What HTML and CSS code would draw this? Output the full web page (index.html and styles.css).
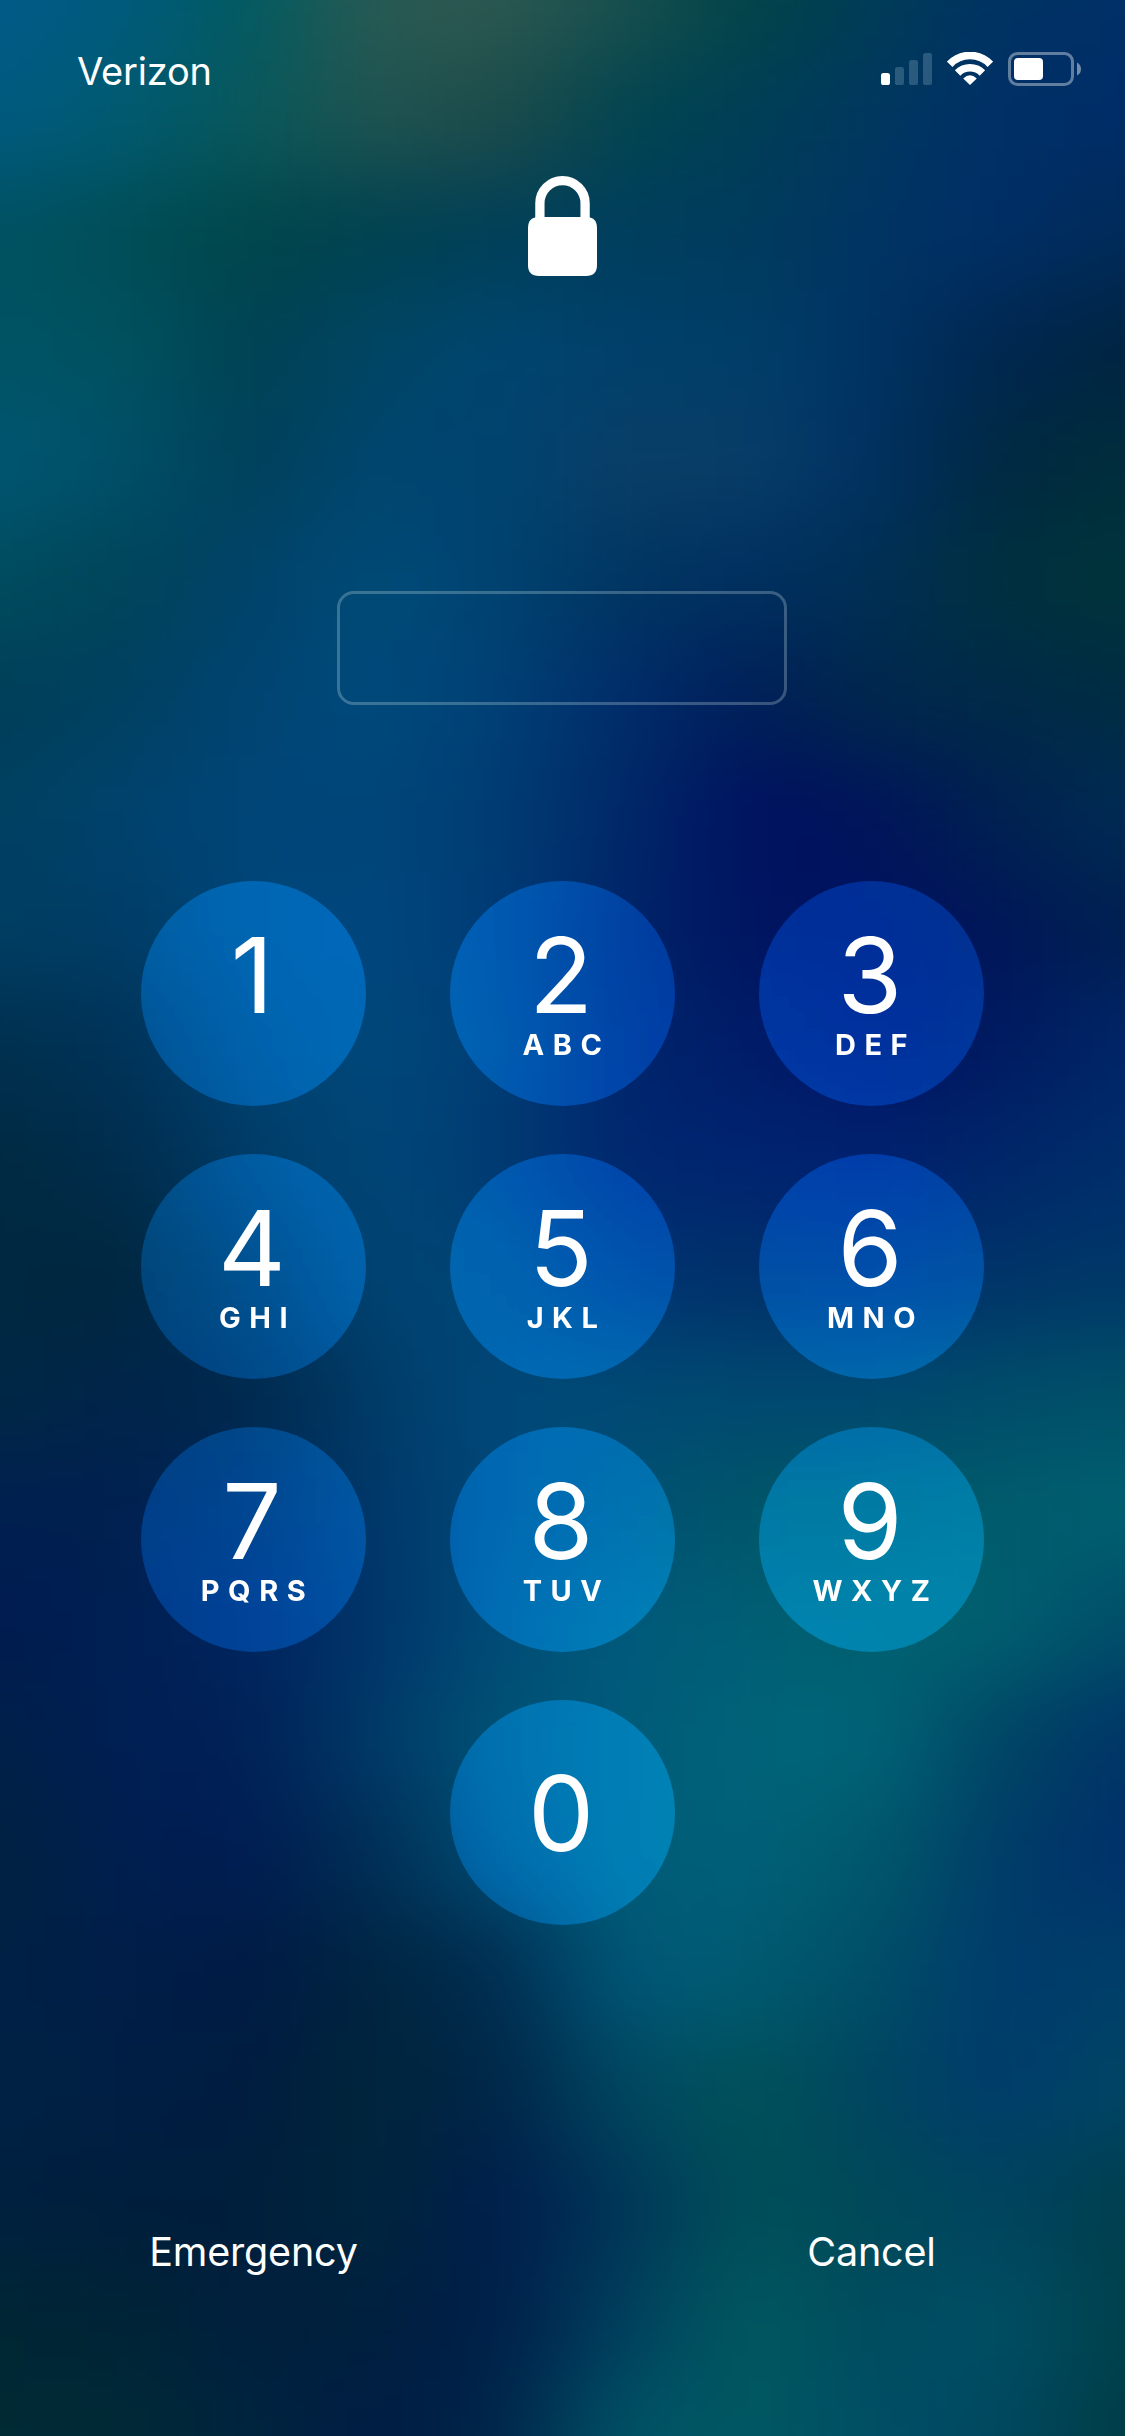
FILE: index.html
```
<!DOCTYPE html>
<html lang="en">
<head>
  <meta charset="UTF-8">
  <meta name="viewport" content="width=device-width, initial-scale=1.0">
  <title>Lock Screen</title>
  <link rel="stylesheet" href="styles.css">
</head>
<body>
  <div class="screen">
    <div class="wallpaper"></div>

    <header class="status-bar">
      <span class="carrier">Verizon</span>
      <div class="status-icons">
        <svg class="signal" width="51" height="32" viewBox="0 0 51 32" fill="#fff">
          <rect x="0" y="20" width="9" height="12" rx="2.6"/>
          <g fill="#dff6ff" opacity=".19">
            <rect x="14" y="14" width="9" height="18" rx="2.6"/>
            <rect x="28" y="7" width="9" height="25" rx="2.6"/>
            <rect x="42" y="0" width="9" height="32" rx="2.6"/>
          </g>
        </svg>
        <svg class="wifi" width="46" height="33" viewBox="0 0 46 33" fill="none" stroke="#fff" stroke-width="7.6">
          <path d="M2.7 12.3A27.7 27.7 0 0 1 43.3 12.3"/>
          <path d="M10.6 21A17.3 17.3 0 0 1 35.4 21"/>
          <path d="M23 33L16.2 26.4Q23 20 29.8 26.4Z" fill="#fff" stroke="none"/>
        </svg>
        <svg class="battery" width="73" height="34" viewBox="0 0 73 34">
          <rect x="1.5" y="1.5" width="63" height="31" rx="8" fill="none" stroke="#fff" stroke-opacity=".38" stroke-width="3"/>
          <rect x="6" y="6" width="29" height="22" rx="4" fill="#fff"/>
          <path d="M69 10.5Q73 12.5 73 17T69 23.5Z" fill="#fff" fill-opacity=".45"/>
        </svg>
      </div>
    </header>

    <svg class="lock" width="69" height="100" viewBox="0 0 69 100">
      <path d="M11.9 48V27.3a22.6 22.6 0 0 1 45.2 0V48" fill="none" stroke="#fff" stroke-width="9.3"/>
      <path d="M11 41H58Q69 41 69 52V89Q69 100 58 100H11Q0 100 0 89V52Q0 41 11 41Z" fill="#fff"/>
    </svg>

    <div class="passcode"></div>

    <main class="keypad">
      <button class="key"><span class="digit">1</span><span class="letters"></span></button>
      <button class="key"><span class="digit">2</span><span class="letters">ABC</span></button>
      <button class="key"><span class="digit">3</span><span class="letters">DEF</span></button>
      <button class="key"><span class="digit">4</span><span class="letters">GHI</span></button>
      <button class="key"><span class="digit">5</span><span class="letters">JKL</span></button>
      <button class="key"><span class="digit">6</span><span class="letters">MNO</span></button>
      <button class="key"><span class="digit">7</span><span class="letters">PQRS</span></button>
      <button class="key"><span class="digit">8</span><span class="letters">TUV</span></button>
      <button class="key"><span class="digit">9</span><span class="letters">WXYZ</span></button>
      <button class="key key-zero"><span class="digit">0</span></button>
    </main>

    <footer class="actions">
      <a class="emergency">Emergency</a>
      <a class="cancel">Cancel</a>
    </footer>
  </div>
</body>
</html>
```
FILE: styles.css
```
* {
  margin: 0;
  padding: 0;
  box-sizing: border-box;
}

body {
  font-family: Inter, "Liberation Sans", sans-serif;
  color: #fff;
  background: #002a4c;
}

.screen {
  position: relative;
  width: 1125px;
  height: 2436px;
  overflow: hidden;
  isolation: isolate;
  display: flex;
  flex-direction: column;
  align-items: center;
}

/* horizontal colour bands, blurred into each other */
.wallpaper {
  position: absolute;
  inset: -174px -125px;
  z-index: -1;
  filter: blur(42px);
  background-repeat: no-repeat;
  background-image:
    linear-gradient(90deg, #005a88 9.1%, #005a7c, #005a60, #2a5a52, #2c5850, #184f4e, #004447, #003c57, #003262, #003068 90.9%),
    linear-gradient(90deg, #005a80 9.1%, #005a70, #08585a, #205350, #1d4b49, #004550, #003e56, #00375f, #002f66, #002c68 90.9%),
    linear-gradient(90deg, #005262 9.1%, #004d56, #00464a, #004250, #003f58, #003e5e, #003b5c, #003464, #002e66, #002a58 90.9%),
    linear-gradient(90deg, #005364 9.1%, #005260, #004152, #004564, #004670, #003f6a, #003e68, #003262, #00264f, #002440 90.9%),
    linear-gradient(90deg, #005672 9.1%, #004f68, #004058, #004670, #004370, #0a3e66, #083e68, #003062, #002840, #002e3c 90.9%),
    linear-gradient(90deg, #004c5e 9.1%, #004458, #00426a, #004b78, #004270, #003560, #002f60, #002f54, #00303e, #00343a 90.9%),
    linear-gradient(90deg, #003f58 9.1%, #004060, #004472, #004a7c, #004074, #002c6a, #001e58, #00284c, #002a48, #002c42 90.9%),
    linear-gradient(90deg, #004060 9.1%, #00426e, #004578, #004678, #003c74, #002868, #001060, #00145a, #00214f, #002c54 90.9%),
    linear-gradient(90deg, #003e62 9.1%, #003c66, #004678, #004780, #003b74, #002468, #001460, #001260, #001658, #002050 90.9%),
    linear-gradient(90deg, #00304e 9.1%, #003258, #004272, #00487a, #003e74, #00246c, #001c68, #001464, #001a60, #002668 90.9%),
    linear-gradient(90deg, #002a42 9.1%, #002c4c, #003c68, #004778, #003a72, #002670, #002470, #002070, #002668, #002e6c 90.9%),
    linear-gradient(90deg, #002840 9.1%, #00263e, #003258, #004474, #004472, #003472, #003068, #003070, #003468, #003868 90.9%),
    linear-gradient(90deg, #002844 9.1%, #00244a, #00284c, #003c68, #00487a, #004a74, #004870, #004870, #004c6a, #005068 90.9%),
    linear-gradient(90deg, #002050 9.1%, #002050, #002858, #00386a, #004878, #005074, #005668, #005868, #005c6c, #006070 90.9%),
    linear-gradient(90deg, #001a50 9.1%, #002052, #002460, #00346a, #004c78, #005a7c, #005e74, #006070, #006070, #004c68 90.9%),
    linear-gradient(90deg, #002048 9.1%, #001e54, #002056, #003a68, #005274, #005a7a, #006478, #006478, #004462, #003468 90.9%),
    linear-gradient(90deg, #002240 9.1%, #001e50, #001c52, #002e54, #004c74, #005c78, #006078, #00586a, #003c68, #00306a 90.9%),
    linear-gradient(90deg, #002044 9.1%, #001e48, #001a44, #002540, #002c50, #00587a, #005a70, #004e66, #003a6c, #003f68 90.9%),
    linear-gradient(90deg, #002244 9.1%, #001e44, #001c40, #00263a, #002448, #004862, #005258, #004460, #003c6c, #004664 90.9%),
    linear-gradient(90deg, #002040 9.1%, #001e3c, #001e3c, #00263c, #001c4c, #003658, #00505a, #004858, #004460, #003e4c 90.9%),
    linear-gradient(90deg, #002634 9.1%, #002436, #001f3e, #00203e, #001e4a, #00405e, #005a60, #004a5e, #004f66, #00404a 90.9%),
    linear-gradient(90deg, #002a34 9.1%, #002a36, #00243e, #001c44, #002448, #005468, #005860, #004e66, #004860, #003c44 90.9%);
  background-size: 100% 233px, 100% 117px, 100% 117px, 100% 117px, 100% 117px, 100% 117px, 100% 117px, 100% 117px, 100% 117px, 100% 117px, 100% 117px, 100% 117px, 100% 117px, 100% 117px, 100% 117px, 100% 117px, 100% 117px, 100% 117px, 100% 117px, 100% 117px, 100% 117px, 100% 233px;
  background-position: 0 0, 0 232px, 0 348px, 0 464px, 0 580px, 0 696px, 0 812px, 0 928px, 0 1044px, 0 1160px, 0 1276px, 0 1392px, 0 1508px, 0 1624px, 0 1740px, 0 1856px, 0 1972px, 0 2088px, 0 2204px, 0 2320px, 0 2436px, 0 2552px;
}

.status-bar {
  width: 100%;
  height: 176px;
  padding: 48px 44px 0 77px;
  display: flex;
  justify-content: space-between;
  align-items: flex-start;
}

.carrier {
  font-size: 38px;
  line-height: 46px;
  font-weight: 400;
  letter-spacing: -0.2px;
}

.status-icons {
  display: flex;
  align-items: flex-start;
  gap: 15px;
  padding-top: 4px;
}

.signal {
  margin-top: 1px;
}

.lock {
  flex: none;
}

.passcode {
  flex: none;
  width: 450px;
  height: 114px;
  margin-top: 315px;
  margin-right: 1px;
  border: 3px solid rgba(240, 255, 250, 0.24);
  border-radius: 17px;
}

.keypad {
  margin-top: 176px;
  display: grid;
  grid-template-columns: repeat(3, 225px);
  grid-auto-rows: 225px;
  column-gap: 84px;
  row-gap: 48px;
}

.key {
  display: flex;
  flex-direction: column;
  align-items: center;
  padding-top: 41px;
  border: none;
  border-radius: 50%;
  color: inherit;
  font-family: inherit;
  background: rgba(0, 125, 230, 0.2);
  backdrop-filter: brightness(1.4);
}

.digit {
  margin-right: 3px;
  font-size: 105px;
  line-height: 105px;
  font-weight: 400;
}

.letters {
  margin-right: -8px;
  font-size: 29px;
  line-height: 35px;
  font-weight: 700;
  letter-spacing: 8.5px;
}

.key-zero {
  grid-column: 2;
  padding-top: 60px;
}

.actions {
  width: 843px;
  margin-top: 303px;
  display: grid;
  grid-template-columns: 225px 225px;
  justify-content: space-between;
  text-align: center;
  font-size: 39.5px;
  line-height: 48px;
  font-weight: 400;
  letter-spacing: -0.2px;
}
```
